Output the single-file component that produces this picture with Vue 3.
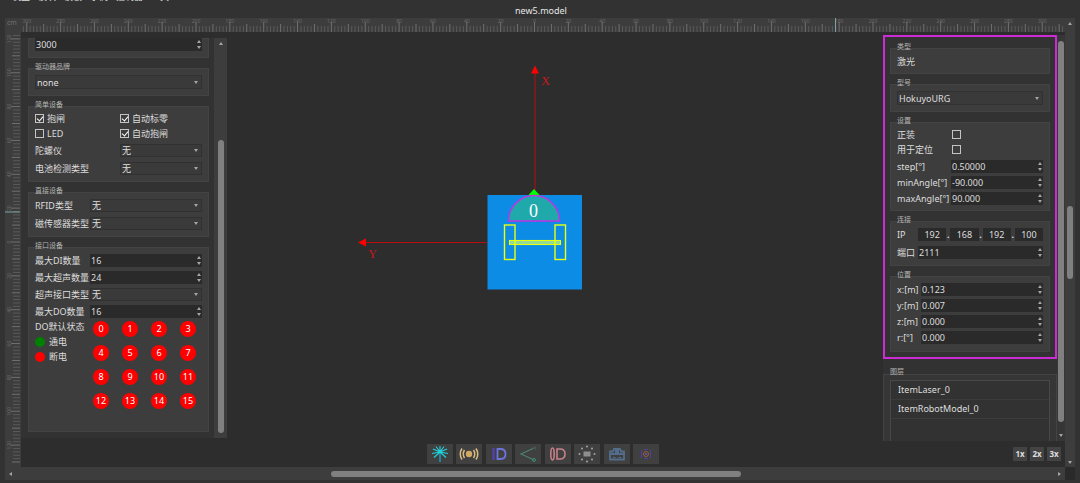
<script setup>
import { reactive } from 'vue'

const menus = ['机型', '模块', '模板', '示例', '控制器', '工具']
const step = 3.385
const marks = (origin, count, length) =>
  Array.from({ length: count * 2 + 1 }, (_, k) => {
    const n = k - count
    return { n, pos: origin + n * step, major: n % 10 === 0, mid: n % 5 === 0, label: Math.abs(n * 2) }
  }).filter((m) => m.pos > 2 && m.pos < length)
const topMarks = marks(513.5, 800, window.innerWidth - 38)
const sideMarks = marks(210, 160, 433)

const form = reactive({
  speed: '3000',
  di: '16',
  sonar: '24',
  dout: '16',
  step: '0.50000',
  min: '-90.000',
  max: '90.000',
  port: '2111',
  ip: ['192', '168', '192', '100'],
})
const checks = reactive([
  { id: 'brake', text: '抱闸', on: true },
  { id: 'zero', text: '自动标零', on: true },
  { id: 'led', text: 'LED', on: false },
  { id: 'autobrake', text: '自动抱闸', on: true },
])
const mounting = reactive([
  { id: 'upright', text: '正装', on: false },
  { id: 'locate', text: '用于定位', on: false },
])
const angles = [
  { key: 'step', text: 'step[°]' },
  { key: 'min', text: 'minAngle[°]' },
  { key: 'max', text: 'maxAngle[°]' },
]
const pose = reactive([
  { id: 'px', text: 'x:[m]', value: '0.123' },
  { id: 'py', text: 'y:[m]', value: '0.007' },
  { id: 'pz', text: 'z:[m]', value: '0.000' },
  { id: 'pr', text: 'r:[°]', value: '0.000' },
])
const outputs = Array.from({ length: 16 }, (_, i) => i)
const layers = ['ItemLaser_0', 'ItemRobotModel_0']
const tools = ['laser', 'sonar', 'lamp', 'fork', 'bumper', 'chip', 'camera', 'tag']
</script>

<template>
  <div class="app">
    <header>
      <nav><button v-for="m in menus" :key="m" type="button">{{ m }}</button></nav>
      <h1>new5.model</h1>
    </header>

    <div class="frame">
      <div class="corner">cm</div>
      <div class="ruler top">
        <svg height="14" width="100%" aria-hidden="true">
          <line v-for="m in topMarks" :key="m.n" :x1="m.pos" :x2="m.pos" :y1="m.major ? 4 : m.mid ? 6 : 8" y2="14" class="tick" :class="{ strong: m.mid }" />
          <text v-for="m in topMarks.filter((t) => t.major)" :key="'t' + m.n" :x="m.pos" y="5" text-anchor="middle">{{ m.label }}</text>
          <line x1="814.5" x2="814.5" y1="0" y2="14" class="cursor" />
        </svg>
      </div>
      <div class="vscroll outer">
        <i class="up"></i><span class="thumb"></span><i class="down"></i>
      </div>

      <div class="ruler side">
        <svg width="16" height="435" aria-hidden="true">
          <line v-for="m in sideMarks" :key="m.n" :y1="m.pos" :y2="m.pos" :x1="m.major ? 6 : m.mid ? 7 : 8" x2="15" class="tick" :class="{ strong: m.mid }" />
          <text v-for="m in sideMarks.filter((t) => t.major)" :key="'s' + m.n" :transform="`translate(6 ${m.pos}) rotate(-90)`" text-anchor="middle">{{ m.label }}</text>
          <line y1="180" y2="180" x1="0" x2="15" class="cursor" />
        </svg>
      </div>

      <main>
        <div class="work">
          <aside class="left">
            <div class="groups">
              <section class="box first">
                <span class="spin"><input v-model="form.speed" aria-label="转速" /><i class="up"></i><i class="down"></i></span>
              </section>

              <h2>驱动器品牌</h2>
              <section class="box single">
                <span class="pick tall"><select aria-label="驱动器品牌"><option>none</option></select></span>
              </section>

              <h2>简单设备</h2>
              <section class="box simple">
                <div class="checks">
                  <label v-for="c in checks" :key="c.id"><input v-model="c.on" type="checkbox" />{{ c.text }}</label>
                </div>
                <div class="rows wide">
                  <label for="gyro">陀螺仪</label>
                  <span class="pick"><select id="gyro"><option>无</option></select></span>
                  <label for="battery">电池检测类型</label>
                  <span class="pick"><select id="battery"><option>无</option></select></span>
                </div>
              </section>

              <h2>直接设备</h2>
              <section class="box direct">
                <div class="rows wide">
                  <label for="rfid">RFID类型</label>
                  <span class="pick"><select id="rfid"><option>无</option></select></span>
                  <label for="magnet">磁传感器类型</label>
                  <span class="pick"><select id="magnet"><option>无</option></select></span>
                </div>
              </section>

              <h2>接口设备</h2>
              <section class="box ports">
                <div class="rows">
                  <label for="di">最大DI数量</label>
                  <span class="spin"><input id="di" v-model="form.di" /><i class="up"></i><i class="down"></i></span>
                  <label for="sonar">最大超声数量</label>
                  <span class="spin"><input id="sonar" v-model="form.sonar" /><i class="up"></i><i class="down"></i></span>
                  <label for="sonartype">超声接口类型</label>
                  <span class="pick"><select id="sonartype"><option>无</option></select></span>
                  <label for="dout">最大DO数量</label>
                  <span class="spin"><input id="dout" v-model="form.dout" /><i class="up"></i><i class="down"></i></span>
                </div>
                <div class="states">
                  <div class="legend">
                    <span>DO默认状态</span>
                    <span class="key on">通电</span>
                    <span class="key off">断电</span>
                  </div>
                  <div class="dots">
                    <button v-for="o in outputs" :key="o" type="button">{{ o }}</button>
                  </div>
                </div>
              </section>
            </div>
            <div class="vscroll inner"><i class="up"></i><span class="thumb"></span></div>
          </aside>

          <svg class="scene" viewBox="227 32 656 409" role="img" aria-label="robot model">
            <rect x="487.5" y="195" width="94.5" height="94.5" fill="#0c8ce4" />
            <g stroke="#b90d12" fill="#f00">
              <path d="M535 190V73M487 242.500H364" />
              <path d="M535 65.500l4 8h-8zM358 242.500l8-4v8z" stroke="none" />
            </g>
            <path d="M534 189l6 6.500h-12z" fill="#0f0" />
            <path d="M508.500 221a25.300 25.300 0 0 1 51 0z" fill="#20a9aa" stroke="#c032e6" stroke-width="1.500" />
            <rect x="509" y="240.500" width="52" height="3.500" fill="#8fdc9a" />
            <g fill="none" stroke="#eaff12" stroke-width="1.400">
              <rect x="504.500" y="225" width="10.500" height="34.500" />
              <rect x="555" y="225" width="10.500" height="34.500" />
              <rect x="509.500" y="240.500" width="51" height="4" stroke-width="1.100" />
            </g>
            <text x="545.500" y="85" class="axis">X</text>
            <text x="372.500" y="258" class="axis">Y</text>
            <text x="533.500" y="217" class="num">0</text>
          </svg>

          <aside class="right">
            <div class="stack">
              <div class="marked">
                <h2>类型</h2>
                <section class="box kind">激光</section>

                <h2>型号</h2>
                <section class="box single">
                  <span class="pick tall"><select aria-label="型号"><option>HokuyoURG</option></select></span>
                </section>

                <h2>设置</h2>
                <section class="box setup">
                  <div v-for="m in mounting" :key="m.id" class="mount">
                    <label :for="m.id">{{ m.text }}</label><input :id="m.id" v-model="m.on" type="checkbox" />
                  </div>
                  <div class="rows angles">
                    <template v-for="a in angles" :key="a.key">
                      <label :for="a.key">{{ a.text }}</label>
                      <span class="spin"><input :id="a.key" v-model="form[a.key]" /><i class="up"></i><i class="down"></i></span>
                    </template>
                  </div>
                </section>

                <h2>连接</h2>
                <section class="box link">
                  <div class="rows net">
                    <label for="ip0">IP</label>
                    <span class="ip">
                      <template v-for="(p, i) in form.ip" :key="i">
                        <b v-if="i">.</b><input :id="'ip' + i" v-model="form.ip[i]" :aria-label="'IP ' + (i + 1)" />
                      </template>
                    </span>
                    <label for="port">端口</label>
                    <span class="spin"><input id="port" v-model="form.port" /><i class="up"></i><i class="down"></i></span>
                  </div>
                </section>

                <h2>位置</h2>
                <section class="box place">
                  <div class="rows pose">
                    <template v-for="p in pose" :key="p.id">
                      <label :for="p.id">{{ p.text }}</label>
                      <span class="spin"><input :id="p.id" v-model="p.value" /><i class="up"></i><i class="down"></i></span>
                    </template>
                  </div>
                </section>
              </div>

              <h2 class="layertitle">图层</h2>
              <section class="layers">
                <ul><li v-for="l in layers" :key="l">{{ l }}</li></ul>
              </section>
            </div>
            <div class="vscroll slim"><span class="thumb"></span><i class="down"></i></div>
          </aside>
        </div>

        <footer>
          <div class="tools">
            <button v-for="t in tools" :key="t" type="button" :aria-label="t">
              <svg width="20" height="18" viewBox="0 0 20 18" fill="none">
                <g v-if="t === 'laser'" stroke="#1fd3da" stroke-width="1.100">
                  <path d="M10 6v11" stroke="#1794b8" stroke-width="1.600" />
                  <path d="M10 7V1M10 7L6 1.500M10 7l4-5.500M10 7L3 4M10 7l7-3M10 7L2 8.500M10 7l8 1.500M10 7l-6 5.500M10 7l6 5.500" />
                </g>
                <g v-else-if="t === 'sonar'" stroke="#d8bd83" stroke-width="1.500">
                  <circle cx="10" cy="9" r="3.200" fill="#d0aa62" stroke="none" />
                  <path d="M5.500 5q-2.500 4 0 8M14.500 5q2.500 4 0 8M3 3.500q-3.500 5.500 0 11M17 3.500q3.500 5.500 0 11" />
                </g>
                <g v-else-if="t === 'lamp'">
                  <path d="M4.500 3v12" stroke="#5141a8" stroke-width="2.500" />
                  <path d="M8.500 4h3q5 0 5 5t-5 5h-3z" stroke="#6c74dc" stroke-width="1.800" />
                </g>
                <g v-else-if="t === 'fork'">
                  <path d="M15 3.500L3 9l12 5.500" stroke="#4c8474" stroke-width="1.100" />
                  <circle cx="16.500" cy="3" r="1.200" stroke="#46625c" /><circle cx="16" cy="15" r="1.400" stroke="#3e9876" />
                </g>
                <g v-else-if="t === 'bumper'" stroke="#c78188" stroke-width="1.600">
                  <ellipse cx="4.500" cy="9" rx="1.700" ry="6" /><path d="M9 4h3q5 0 5 5t-5 5H9z" />
                </g>
                <g v-else-if="t === 'chip'" fill="#a5a5a5">
                  <rect x="6.500" y="6.500" width="7" height="5" fill="#8e8e8e" />
                  <circle v-for="(c, i) in [[10, 1.500], [15, 3.500], [17.500, 9], [15, 14.500], [10, 16.500], [5, 14.500], [2.500, 9], [5, 3.500]]" :key="i" :cx="c[0]" :cy="c[1]" r="1" />
                </g>
                <g v-else-if="t === 'camera'">
                  <path d="M3 6.500h3l1-2.500h6l1 2.500h3v8H3z" stroke="#536d8c" stroke-width="1.800" />
                  <path d="M4 8h12v2H4zM8 5h4v3H8z" fill="#536d8c" />
                  <path d="M6 12.500h2.500M11.500 12.500H14" stroke="#536d8c" stroke-width="1.200" />
                </g>
                <g v-else>
                  <path d="M5.500 5v8M14.500 5v8M8 4.500h4M8 13.500h4" stroke="#4c4496" />
                  <circle cx="10" cy="9" r="2.500" stroke="#a3573f" /><circle cx="10" cy="9" r="1" fill="#4d62b4" />
                </g>
              </svg>
            </button>
          </div>
          <div class="zooms"><button v-for="z in 3" :key="z" type="button">{{ z }}x</button></div>
        </footer>
      </main>

      <div class="hscroll"><i class="prev"></i><span class="thumb"></span><i class="next"></i></div>
      <div class="notch"></div>
    </div>
  </div>
</template>

<style>
body {
  margin: 0;
  background: #323232;
}
</style>

<style scoped>
* {
  box-sizing: border-box;
}
.app {
  overflow: hidden;
  padding: 0 5px 3px;
  background: #323232;
  color: #dedede;
  font: 9px/13px "Noto Sans", "Noto Sans CJK SC", sans-serif;
}
button,
input,
select {
  margin: 0;
  padding: 0;
  border: 0;
  border-radius: 0;
  background: none;
  color: inherit;
  font: inherit;
  min-width: 0;
}
nav {
  display: flex;
  align-items: flex-end;
  gap: 8px;
  height: 3px;
  padding-left: 7px;
}
nav button {
  line-height: 12px;
}
h1 {
  margin: 0;
  font-size: 9px;
  font-weight: 400;
  line-height: 15px;
  text-align: center;
  padding-left: 2px;
  color: #e6e6e6;
}
.frame {
  display: grid;
  grid-template-columns: 16px minmax(0, 1fr) 10px;
  grid-template-rows: 14px auto 13px;
  background: #3d3d3d;
}
.corner {
  color: #707070;
  font-size: 7px;
  line-height: 9px;
  padding-left: 2px;
}
.ruler svg {
  display: block;
}
.ruler text {
  fill: #6a6a6a;
  font-size: 5px;
}
.tick {
  stroke: #5a5a5a;
}
.tick.strong {
  stroke: #707070;
}
.cursor {
  stroke: #7ba4a2;
}
main {
  background: #2d2d2d;
}
.work {
  display: grid;
  grid-template-columns: 206px minmax(0, 1fr) 182px;
  height: 409px;
}
.scene {
  width: 100%;
  height: 409px;
}
.axis {
  fill: #c8181c;
  font: 12px "Liberation Serif", serif;
  text-anchor: middle;
}
.num {
  fill: #fff;
  font: 18px "Liberation Serif", serif;
  text-anchor: middle;
}

/* scroll bars */
.vscroll {
  display: flex;
  flex-direction: column;
  align-items: center;
  background: #3d3d3d;
}
.thumb {
  display: block;
  background: #808080;
  border-radius: 3px;
}
.outer {
  grid-row: 1 / 3;
  grid-column: 3;
  padding: 4px 0 3px;
}
.outer .thumb {
  width: 6px;
  height: 73px;
  margin: 181px 0 auto;
}
.inner {
  width: 13px;
  padding-top: 4px;
}
.inner .thumb {
  width: 6px;
  height: 293px;
  margin-top: 95px;
}
.slim {
  width: 8px;
  padding-top: 6px;
}
.slim .thumb {
  width: 6px;
  height: 381px;
}
.slim .down {
  margin-top: 12px;
}
.hscroll {
  grid-column: 1 / 3;
  display: flex;
  align-items: center;
  padding: 0 4px;
}
.hscroll .thumb {
  width: 39%;
  height: 6px;
  margin: 0 auto 0 319px;
}
.notch {
  background: #2a2a2a;
}
i {
  display: block;
  width: 0;
  height: 0;
  border: 2px solid transparent;
}
i.up {
  border-top: 0;
  border-bottom: 3px solid #a5a5a5;
}
i.down {
  border-bottom: 0;
  border-top: 3px solid #a5a5a5;
}
i.prev {
  border-left: 0;
  border-right: 3px solid #a5a5a5;
}
i.next {
  border-right: 0;
  border-left: 3px solid #a5a5a5;
}

/* panels */
.left {
  display: flex;
  justify-content: space-between;
  height: 400px;
  margin-top: 6px;
  background: #323232;
}
.groups {
  width: 188px;
  padding-left: 7px;
}
h2 {
  margin: 5px 0 -3px;
  padding-left: 7px;
  color: #b4b4b4;
  font-size: 7px;
  font-weight: 400;
  line-height: 8px;
  position: relative;
}
.box {
  padding: 7px;
  background: #3d3d3d;
  box-shadow: inset 0 0 0 1px #434343;
}
.box.first {
  height: 20px;
  padding-top: 0;
}
.box.simple {
  padding-top: 5px;
}
.box.ports {
  height: 185px;
}
.box.kind {
  height: 26px;
}
.box.setup {
  padding: 5px 7px 6px;
}
.box.place {
  padding-bottom: 8px;
}
.checks {
  display: grid;
  grid-template-columns: 85px 1fr;
  grid-auto-rows: 15px;
  align-items: center;
  margin-bottom: 3px;
}
.checks label {
  display: flex;
  align-items: center;
  gap: 3px;
  white-space: nowrap;
}
input[type="checkbox"] {
  display: grid;
  place-items: center;
  width: 9px;
  height: 9px;
  appearance: none;
  border: 1px solid #c4c4c4;
}
input[type="checkbox"]:checked::before {
  content: "";
  width: 3px;
  height: 5px;
  margin-top: -2px;
  border: solid #fff;
  border-width: 0 1px 1px 0;
  transform: rotate(40deg);
}
.rows {
  display: grid;
  grid-template-columns: 55px minmax(0, 1fr);
  grid-auto-rows: 13px;
  row-gap: 4px;
}
.rows label {
  white-space: nowrap;
}
.rows.wide {
  row-gap: 5px;
}
.simple .rows {
  grid-template-columns: 85px minmax(0, 1fr);
}
.rows.angles {
  grid-template-columns: 54px minmax(0, 1fr);
  row-gap: 3px;
  margin-top: 3px;
}
.rows.net {
  grid-template-columns: 21px minmax(0, 1fr);
  row-gap: 5px;
}
.rows.pose {
  grid-template-columns: 24px minmax(0, 1fr);
  row-gap: 3px;
}
.mount {
  display: grid;
  grid-template-columns: 55px 1fr;
  align-items: center;
  height: 15px;
}
.spin,
.pick {
  display: grid;
  grid-template-columns: minmax(0, 1fr) 4px;
  grid-template-rows: 1fr 1fr;
  height: 13px;
  padding-right: 1px;
  background: #2a2a2a;
}
.spin input {
  grid-row: 1 / 3;
  padding-left: 1px;
  height: 13px;
}
.spin i {
  align-self: center;
}
.pick {
  grid-template-rows: 1fr;
  align-items: center;
  padding-right: 3px;
  background: #3a3a3a;
  border: 1px solid #313131;
}
.pick select {
  grid-area: 1 / 1 / 2 / 3;
  height: 11px;
  padding-left: 1px;
  appearance: none;
  line-height: 11px;
}
.pick::after {
  content: "";
  grid-area: 1 / 2;
  border: 2px solid transparent;
  border-top: 3px solid #a5a5a5;
  border-bottom: 0;
  pointer-events: none;
}
.pick.tall {
  height: 14px;
}
.ip {
  display: flex;
}
.ip input {
  flex: 1;
  width: 20px;
  background: #2a2a2a;
  text-align: center;
}
.ip b {
  width: 4px;
  text-align: center;
}
.states {
  display: flex;
  margin-top: 1px;
}
.legend {
  width: 58px;
}
.legend span {
  display: block;
  line-height: 15px;
  white-space: nowrap;
}
.legend .key {
  display: flex;
  align-items: center;
  gap: 4px;
}
.key::before {
  content: "";
  width: 10px;
  height: 10px;
  border-radius: 50%;
  background: #f00;
}
.key.on::before {
  background: #008000;
}
.dots {
  display: grid;
  grid-template-columns: repeat(4, 16px);
  grid-auto-rows: 16px;
  gap: 8px 13px;
  padding-top: 2px;
}
.dots button {
  border-radius: 50%;
  background: #f00;
  color: #fff;
  line-height: 16px;
}
.right {
  display: flex;
  padding-top: 3px;
}
.stack {
  display: flex;
  flex-direction: column;
  flex: 1;
  background: #323232;
}
.marked {
  padding: 1px 5px 5px;
  border: 2px solid #cd2bd6;
}
.right .vscroll {
  background: #363636;
}
h2.layertitle {
  margin: 9px 0 -2px;
}
.layers {
  flex: 1;
  padding: 6px 7px 0;
  background: #363636;
  box-shadow: inset 0 1px #434343, inset 1px 0 #434343, inset -1px 0 #434343;
}
ul {
  height: 100%;
  margin: 0;
  padding: 0;
  list-style: none;
  background: #323232;
  border: 1px solid #484848;
  border-bottom: 0;
}
li {
  padding-left: 7px;
  border-bottom: 1px solid #3c3c3c;
  line-height: 18px;
}

footer {
  display: grid;
  grid-template-columns: 1fr 232px 1fr;
  align-items: center;
  height: 26px;
}
.tools {
  grid-column: 2;
  display: flex;
  justify-content: space-between;
}
.tools button {
  display: grid;
  place-items: center;
  width: 26px;
  height: 20px;
  background: #404040;
}
.zooms {
  display: flex;
  justify-content: flex-end;
  gap: 3px;
  padding-right: 4px;
}
.zooms button {
  width: 14px;
  height: 14px;
  background: #434343;
  font-size: 8px;
  font-weight: 700;
  line-height: 14px;
}
</style>
